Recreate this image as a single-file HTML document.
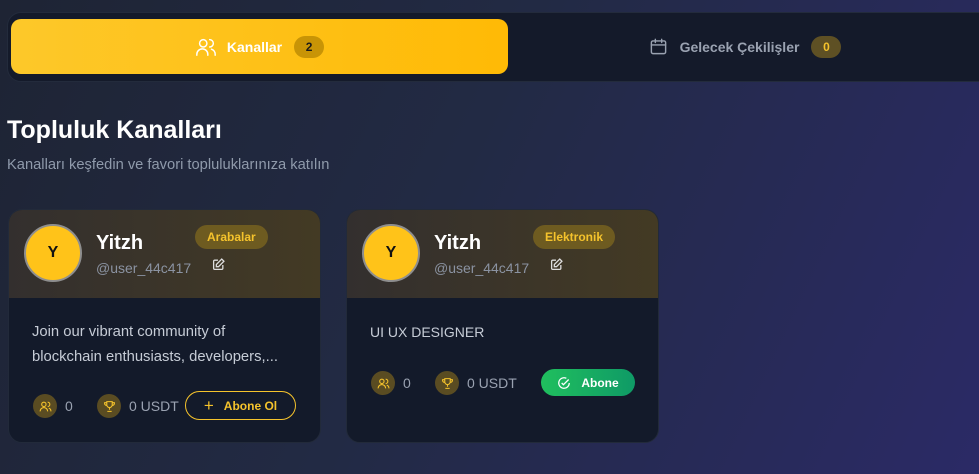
<!DOCTYPE html>
<html><head><meta charset="utf-8"><style>
*{box-sizing:border-box;margin:0;padding:0}
body{width:979px;height:474px;overflow:hidden;font-family:"Liberation Sans",sans-serif;background:linear-gradient(115deg,#1e2434 0%,#222a44 45%,#2b2a66 100%);position:relative}
.tabs{position:absolute;left:7px;top:12px;width:990px;height:70px;background:#141a2a;border:1px solid #232b3c;border-radius:14px}
.tab1{position:absolute;left:11px;top:19px;width:497px;height:55px;border-radius:10px;background:linear-gradient(90deg,#fdc82a,#ffba05);display:flex;align-items:center;justify-content:center;color:#fff;font-weight:bold;font-size:14px}
.pill{display:inline-flex;align-items:center;justify-content:center;width:30px;height:22px;border-radius:11px;font-size:12px;font-weight:bold}
.tab2{position:absolute;left:500px;top:19px;width:490px;height:55px;display:flex;align-items:center;justify-content:center;color:#9aa2b1;font-weight:bold;font-size:14px}
h1{position:absolute;left:7px;top:116px;color:#fff;font-size:25px;font-weight:bold}
.sub{position:absolute;left:7px;top:157px;color:#8f9aab;font-size:14.7px}
.card{position:absolute;top:209px;width:313px;height:234px;background:#131a2a;border:1px solid #222a3a;border-radius:14px;overflow:hidden}
.hd{height:88px;background:linear-gradient(90deg,#332f2e,#433a24);position:relative}
.av{position:absolute;left:15px;top:14px;width:58px;height:58px;border-radius:50%;background:#ffc319;border:2px solid #8e8e8e;display:flex;align-items:center;justify-content:center;font-size:16px;font-weight:bold;color:#111}
.nm{position:absolute;left:87px;top:22px;color:#fff;font-size:20px;font-weight:bold}
.us{position:absolute;left:87px;top:50px;color:#8b93a2;font-size:14px}
.ed{position:absolute;left:203px;top:48px}
.tag{position:absolute;top:15px;height:24px;border-radius:12px;background:#6e5b20;color:#f5c32c;font-size:12px;font-weight:bold;display:flex;align-items:center;padding:0 12px}
.desc{position:absolute;left:23px;top:110px;color:#c6ccd6;font-size:14.8px;line-height:25px}
.st{position:absolute;display:flex;align-items:center;color:#9aa2b1;font-size:14px}
.ic{width:24px;height:24px;border-radius:50%;background:#5a4c22;display:flex;align-items:center;justify-content:center;margin-right:8px}
</style></head><body>
<div class="tabs"></div>
<div class="tab1"><svg width="22" height="22" viewBox="0 0 24 24" fill="none" stroke="#fff" stroke-width="1.6" stroke-linecap="round"><circle cx="9" cy="8" r="4"/><path d="M2 21v-1a6 6 0 0 1 12 0v1M16 4a4 4 0 0 1 0 8M22 21v-1a6 6 0 0 0-4-5.6"/></svg><span style="margin:0 12px 0 10px">Kanallar</span><span class="pill" style="background:#c89406;color:#1a1a1a">2</span></div>
<div class="tab2"><svg width="19" height="19" viewBox="0 0 24 24" fill="none" stroke="#9aa2b1" stroke-width="1.8" stroke-linecap="round"><rect x="3" y="5" width="18" height="16" rx="2"/><path d="M3 10h18M8 3v4M16 3v4"/></svg><span style="margin:0 12px 0 12px">Gelecek Çekilişler</span><span class="pill" style="background:#5e5024;color:#f5c32c">0</span></div>
<h1>Topluluk Kanalları</h1>
<div class="sub">Kanalları keşfedin ve favori topluluklarınıza katılın</div>

<div class="card" style="left:8px">
<div class="hd"><div class="av">Y</div><div class="nm">Yitzh</div><div class="us">@user_44c417</div>
<svg class="ed" width="13" height="13" viewBox="0 0 24 24" fill="none" stroke="#ddd" stroke-width="2.4"><path d="M11 4H5a2 2 0 0 0-2 2v13a2 2 0 0 0 2 2h13a2 2 0 0 0 2-2v-6"/><path d="M18 2l4 4-10 10H8v-4z"/></svg>
<div class="tag" style="left:186px">Arabalar</div></div>
<div class="desc">Join our vibrant community of<br>blockchain enthusiasts, developers,...</div>
<div class="st" style="left:24px;top:184px"><div class="ic"><svg width="13" height="13" viewBox="0 0 24 24" fill="none" stroke="#f5c32c" stroke-width="2"><circle cx="9" cy="8" r="4"/><path d="M2 21a7 7 0 0 1 14 0M16 4a4 4 0 0 1 0 8M22 21a6 6 0 0 0-4-6"/></svg></div>0</div>
<div class="st" style="left:88px;top:184px"><div class="ic"><svg width="13" height="13" viewBox="0 0 24 24" fill="none" stroke="#f5c32c" stroke-width="2"><path d="M7 3h10v6a5 5 0 0 1-10 0zM7 5H3a4 4 0 0 0 4 5M17 5h4a4 4 0 0 1-4 5M12 14v4M8 21h8"/></svg></div>0 USDT</div>
<div style="position:absolute;left:176px;top:181px;width:111px;height:29px;border:1.5px solid #f5c32c;border-radius:15px;color:#f5c32c;font-size:12px;font-weight:bold;display:flex;align-items:center;justify-content:center"><span style="font-size:17px;font-weight:normal;margin-right:10px">+</span>Abone Ol</div>
</div>

<div class="card" style="left:346px">
<div class="hd"><div class="av">Y</div><div class="nm">Yitzh</div><div class="us">@user_44c417</div>
<svg class="ed" width="13" height="13" viewBox="0 0 24 24" fill="none" stroke="#ddd" stroke-width="2.4"><path d="M11 4H5a2 2 0 0 0-2 2v13a2 2 0 0 0 2 2h13a2 2 0 0 0 2-2v-6"/><path d="M18 2l4 4-10 10H8v-4z"/></svg>
<div class="tag" style="left:186px">Elektronik</div></div>
<div class="desc" style="top:110px;font-size:14px">UI UX DESIGNER</div>
<div class="st" style="left:24px;top:161px"><div class="ic"><svg width="13" height="13" viewBox="0 0 24 24" fill="none" stroke="#f5c32c" stroke-width="2"><circle cx="9" cy="8" r="4"/><path d="M2 21a7 7 0 0 1 14 0M16 4a4 4 0 0 1 0 8M22 21a6 6 0 0 0-4-6"/></svg></div>0</div>
<div class="st" style="left:88px;top:161px"><div class="ic"><svg width="13" height="13" viewBox="0 0 24 24" fill="none" stroke="#f5c32c" stroke-width="2"><path d="M7 3h10v6a5 5 0 0 1-10 0zM7 5H3a4 4 0 0 0 4 5M17 5h4a4 4 0 0 1-4 5M12 14v4M8 21h8"/></svg></div>0 USDT</div>
<div style="position:absolute;left:194px;top:159px;width:94px;height:27px;background:linear-gradient(90deg,#20bf5e,#0f9a66);border-radius:14px;color:#fff;font-size:12px;font-weight:bold;display:flex;align-items:center;justify-content:center"><svg width="14" height="14" viewBox="0 0 24 24" fill="none" stroke="#fff" stroke-width="2.2" style="margin-right:10px"><path d="M21 12a9 9 0 1 1-5-8"/><path d="M8 12l3 3 9-9"/></svg>Abone</div>
</div>
</body></html>
